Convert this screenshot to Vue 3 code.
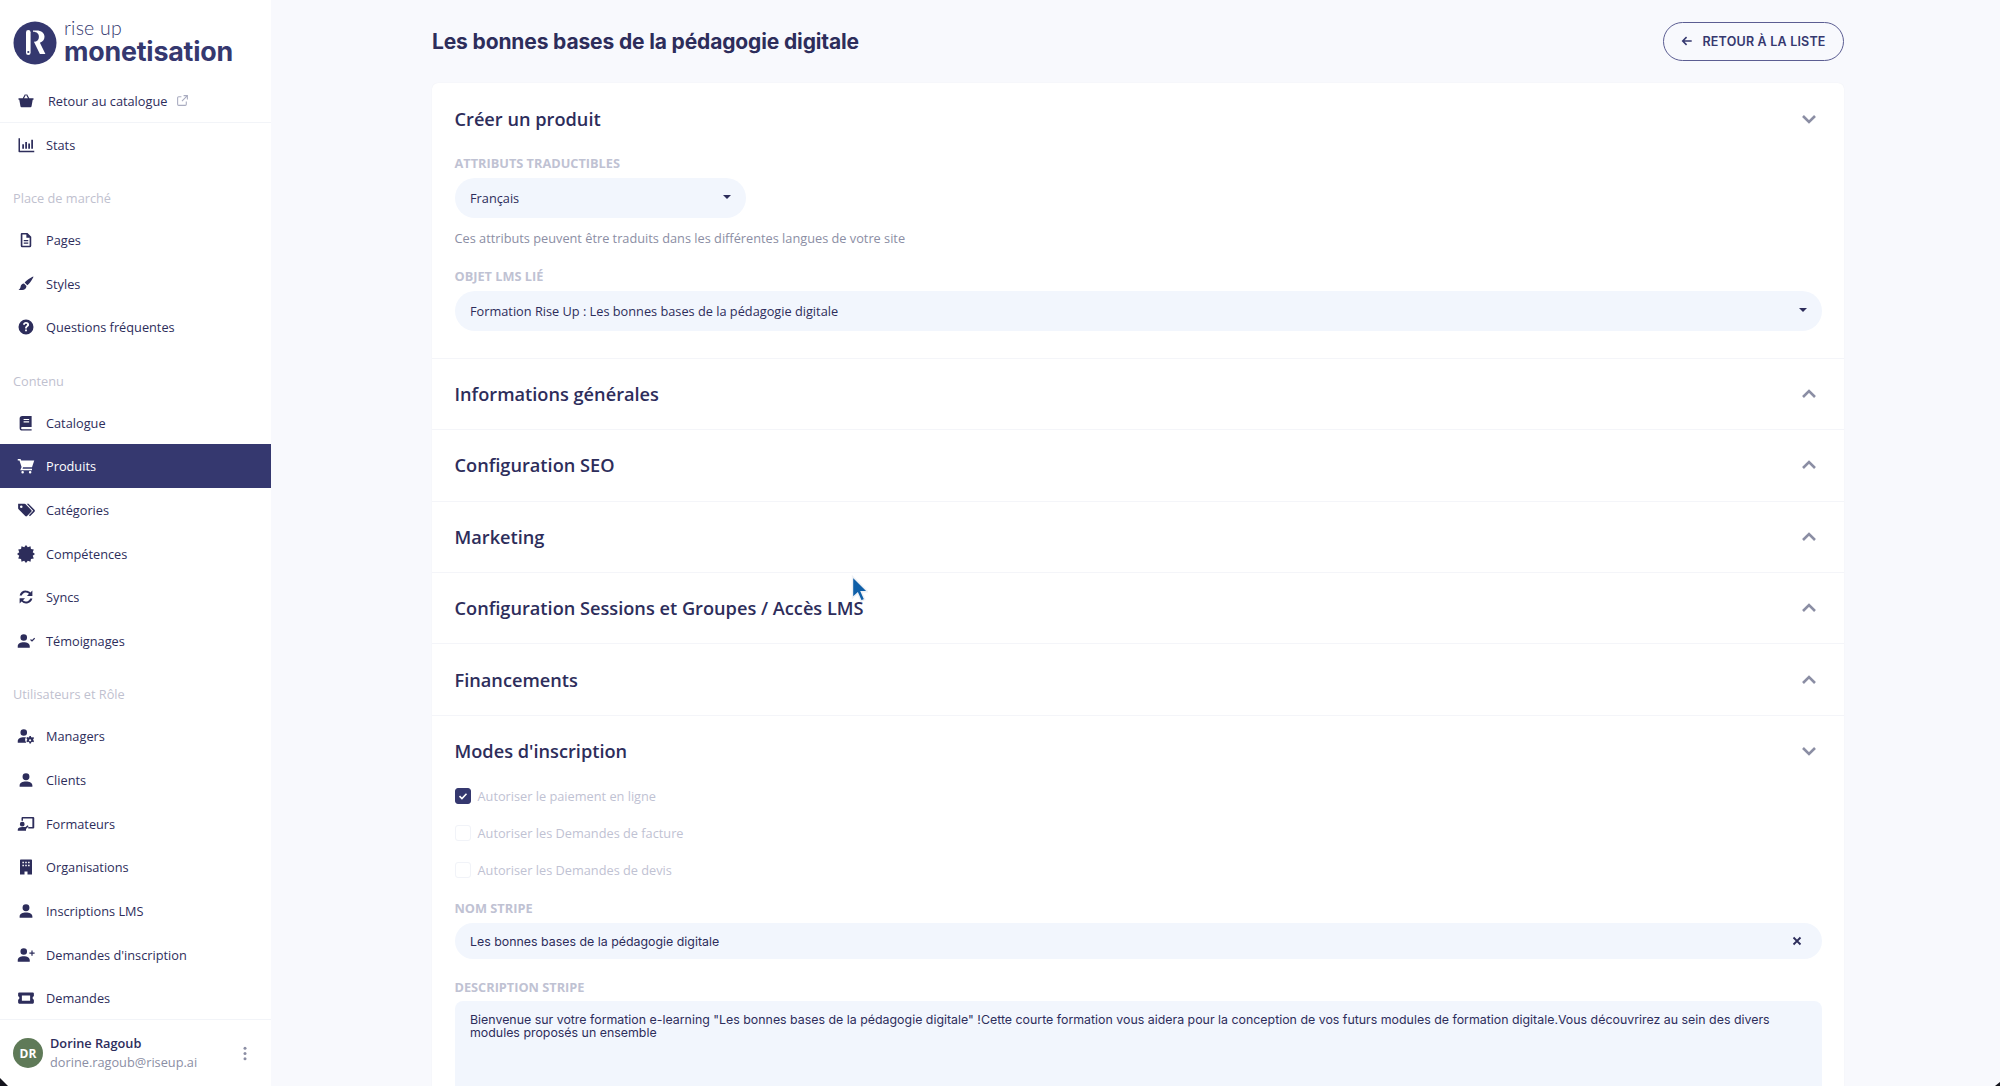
<script setup>
const teeth = 12
const badge = Array.from({ length: teeth * 2 }, (_, i) => {
  const r = i % 2 ? 9.3 : 12
  const a = (Math.PI * i) / teeth
  return `${i ? 'L' : 'M'}${(12 + r * Math.sin(a)).toFixed(2)} ${(12 - r * Math.cos(a)).toFixed(2)}`
}).join('') + 'z'
const icons = {
  basket: 'M3 10h18l-1.6 9a1.5 1.5 0 0 1-1.5 1.2H6.1A1.5 1.5 0 0 1 4.6 19zM2 8.4h5.6l3-5.4 1.4.8-2.6 4.6h5.2L12 3.8l1.4-.8 3 5.4H22v2H2z',
  file: 'M6 2.500h8l5 5v12a2 2 0 0 1-2 2H7a2 2 0 0 1-2-2v-15a2 2 0 0 1 1-2zm1.200 2v15h9.600V9h-4.300V4.500zM9 12h6v1.600H9zm0 3.300h6v1.600H9z',
  brush: 'M21.800 2.200c.6.600-5.300 9.600-8 11.500l-3.600-3.600c2-2.700 11-8.500 11.600-7.900zM9.300 11.400l3.300 3.300c-.1 3.200-2.600 5.300-5.600 5.300H2c1.900-1.300 2.500-2.300 2.700-4 .3-2.700 2.300-4.600 4.600-4.600z',
  help: 'M12 2a10 10 0 1 0 0 20 10 10 0 0 0 0-20zm1.200 15.700h-2.400v-2.300h2.400zm2.300-7.200c-.5.800-1.600 1.400-2.100 2-.2.300-.2.700-.2 1.500h-2.400c0-1.300.1-2 .7-2.700.6-.8 2-1.400 2-2.500 0-.8-.7-1.300-1.500-1.300-1 0-1.600.6-1.800 1.700l-2.300-.5c.4-2.100 2-3.300 4.100-3.300 2.400 0 4.100 1.300 4.100 3.300 0 1-.2 1.600-.6 2.300z',
  book: 'M7 2.500h12.500v14.700H7a1.600 1.600 0 0 0 0 3.200h12.500v1.600H7A3.500 3.500 0 0 1 3.500 18.500V6A3.500 3.500 0 0 1 7 2.500zm1.800 4v1.500h7.400V6.500zm0 3.200v1.500h7.400V9.700z',
  cart: 'M1 2.500h3.700l.9 2.300H23l-3 9H8.100l-.7 1.800H20v2.100H4.300l1.800-4.300L3.300 4.600H1zM7.500 18.700a1.700 1.700 0 1 1 0 3.400 1.700 1.700 0 0 1 0-3.400zm10 0a1.700 1.700 0 1 1 0 3.400 1.700 1.700 0 0 1 0-3.400z',
  tags: 'M1.500 3.500h8.300a2 2 0 0 1 1.400.6l7.800 7.900a1.700 1.700 0 0 1 0 2.400l-5.600 5.600a1.700 1.700 0 0 1-2.400 0l-8.900-8.900a2 2 0 0 1-.6-1.400zM5.700 6a1.700 1.700 0 1 0 0 3.400 1.700 1.700 0 0 0 0-3.400zM13 3.500h2.300l8 8.300a1.800 1.800 0 0 1 0 2.500l-6 6-1.400-1.400 5.700-5.800z',
  badge,
  sync: 'M12 3.500c2.300 0 4.400.9 5.900 2.400L20.500 3.300v7.200h-7.200l2.700-2.700A5.700 5.700 0 0 0 6.400 10H3.500A8.600 8.600 0 0 1 12 3.500zM3.500 13.500h7.200L8 16.200A5.700 5.700 0 0 0 17.600 14h2.900a8.600 8.600 0 0 1-14.400 4.100l-2.600 2.600z',
  userCheck: 'M9 3a4.400 4.400 0 1 1 0 8.800A4.400 4.400 0 0 1 9 3zM1 21v-2.500c0-3 3.600-5 8-5s8 2 8 5V21zM17.500 10.500l1.100-1.100 1.400 1.400 3-3 1.100 1.100-4.100 4.100z',
  userCog: 'M9 3a4.400 4.400 0 1 1 0 8.800A4.400 4.400 0 0 1 9 3zM1 21v-2.500c0-3 3.600-5 8-5 1 0 2 .1 2.900.3a6 6 0 0 0 .5 7.200zM18.500 12l.4 1.500 1.400.6 1.400-.7 1 1.700-1.100 1 .1 1.500 1.100 1-1 1.700-1.500-.6-1.300.7-.4 1.500h-2l-.4-1.500-1.300-.7-1.500.6-1-1.700 1.100-1 0-1.500-1.100-1 1-1.700 1.500.7 1.300-.6.400-1.500zm-1 4.300a1.500 1.500 0 1 0 0 3 1.500 1.500 0 0 0 0-3z',
  user: 'M12 3a4.600 4.600 0 1 1 0 9.200A4.600 4.600 0 0 1 12 3zM3.500 21v-2c0-3 3.800-5 8.500-5s8.500 2 8.500 5v2z',
  teacher: 'M7 2.500h14.500a1.500 1.500 0 0 1 1.500 1.500v12.500a1.500 1.500 0 0 1-1.500 1.500h-6.500v-2h5.500V4.500H8v3H6V4a1.500 1.500 0 0 1 1-1.500zM7 9a3.200 3.200 0 1 1 0 6.400A3.200 3.200 0 0 1 7 9zM1 21v-1.500c0-2 2.600-3.500 6-3.500h4.500l2.500-2.500 1.500 1.500-3.500 3.500H12V21z',
  building: 'M5 2h14a1 1 0 0 1 1 1v19h-6v-4h-4v4H4V3a1 1 0 0 1 1-1zm2.200 3v2h2V5zm3.800 0v2h2V5zm3.800 0v2h2V5zM7.200 9v2h2V9zm3.800 0v2h2V9zm3.800 0v2h2V9z',
  userPlus: 'M9 3a4.400 4.400 0 1 1 0 8.800A4.400 4.400 0 0 1 9 3zM1 21v-2.500c0-3 3.600-5 8-5s8 2 8 5V21zM19.200 6h1.600v2.700h2.700v1.600h-2.700V13h-1.600v-2.700h-2.700V8.700h2.700z',
  ticket: 'M3 4.500h18a1.500 1.500 0 0 1 1.500 1.500v3.700a2.400 2.400 0 0 0 0 4.600V18a1.500 1.500 0 0 1-1.500 1.500H3A1.500 1.500 0 0 1 1.500 18v-3.700a2.400 2.400 0 0 0 0-4.600V6A1.500 1.500 0 0 1 3 4.500zM6.500 8.500v7h11v-7z'
}
const groups = [
  { title: 'Place de marché', items: [['Pages', 'file'], ['Styles', 'brush'], ['Questions fréquentes', 'help']] },
  { title: 'Contenu', items: [['Catalogue', 'book'], ['Produits', 'cart', true], ['Catégories', 'tags'], ['Compétences', 'badge'], ['Syncs', 'sync'], ['Témoignages', 'userCheck']] },
  { title: 'Utilisateurs et Rôle', items: [['Managers', 'userCog'], ['Clients', 'user'], ['Formateurs', 'teacher'], ['Organisations', 'building'], ['Inscriptions LMS', 'user'], ["Demandes d'inscription", 'userPlus'], ['Demandes', 'ticket']] }
]
const closedSections = ['Informations générales', 'Configuration SEO', 'Marketing', 'Configuration Sessions et Groupes / Accès LMS', 'Financements']
const checks = [['Autoriser le paiement en ligne', true], ['Autoriser les Demandes de facture', false], ['Autoriser les Demandes de devis', false]]
</script>

<template>
  <div class="page">
    <aside class="side">
      <div class="logo">
        <svg class="mark" viewBox="0 0 44 44">
          <circle cx="22" cy="22" r="21.500" fill="#35386f" />
          <rect x="13" y="9" width="4.600" height="25" rx="2.300" fill="#fff" />
          <circle cx="15.300" cy="31" r="1.100" fill="#35386f" />
          <path d="M20 9.500h3.500c5 0 8 2.700 8 6.300 0 3-1.800 5-4.600 5.900l5.500 11.300h-5.500l-6-12.300c3 0 5-1.800 5-4.800 0-3-1.800-5.200-5.900-5.200z" fill="#fff" />
        </svg>
        <div class="logo-text">
          <span class="logo-top">rise up</span>
          <span class="logo-main">monetisation</span>
        </div>
      </div>
      <nav class="nav">
        <a class="back">
          <svg class="ico" viewBox="0 0 24 24"><path :d="icons.basket" /></svg>
          <span>Retour au catalogue</span>
          <svg class="ext" viewBox="0 0 24 24"><path d="M10 5H5a2 2 0 0 0-2 2v12a2 2 0 0 0 2 2h12a2 2 0 0 0 2-2v-5M14 3h7v7M21 3 11 13" /></svg>
        </a>
        <a class="item stats">
          <svg class="ico" viewBox="0 0 24 24"><path d="M2 3h2v16.500h19v2H3a1 1 0 0 1-1-1zM7 11h2.300v6H7zm4-3h2.300v9H11zm4 2h2.300v7H15zm4-5h2.300v12H19z" /></svg>
          <span>Stats</span>
        </a>
        <section v-for="g in groups" :key="g.title" class="group">
          <h3>{{ g.title }}</h3>
          <a v-for="it in g.items" :key="it[0]" class="item" :class="{ active: it[2] }">
            <svg class="ico" viewBox="0 0 24 24"><path :d="icons[it[1]]" /></svg>
            <span>{{ it[0] }}</span>
          </a>
        </section>
      </nav>
      <footer class="me">
        <div class="avatar">DR</div>
        <div class="who">
          <strong>Dorine Ragoub</strong>
          <span>dorine.ragoub@riseup.ai</span>
        </div>
        <svg class="dots" viewBox="0 0 6 20"><circle cx="3" cy="3" r="2" /><circle cx="3" cy="10" r="2" /><circle cx="3" cy="17" r="2" /></svg>
      </footer>
    </aside>

    <main class="main">
      <header class="head">
        <h1>Les bonnes bases de la pédagogie digitale</h1>
        <button class="back-btn">
          <svg viewBox="0 0 14 14"><path d="M12.500 7H2M6.500 2.500 2 7l4.500 4.500" /></svg>
          RETOUR À LA LISTE
        </button>
      </header>

      <div class="card">
        <section class="sec open first">
          <div class="sec-head">
            <h2>Créer un produit</h2>
            <svg class="chev" viewBox="0 0 16 10"><path d="M2 2l6 6 6-6" /></svg>
          </div>
          <label class="lab">ATTRIBUTS TRADUCTIBLES</label>
          <div class="field sel short">Français<i class="caret"></i></div>
          <p class="hint">Ces attributs peuvent être traduits dans les différentes langues de votre site</p>
          <label class="lab">OBJET LMS LIÉ</label>
          <div class="field sel">Formation Rise Up : Les bonnes bases de la pédagogie digitale<i class="caret"></i></div>
        </section>

        <section v-for="s in closedSections" :key="s" class="sec">
          <div class="sec-head">
            <h2>{{ s }}</h2>
            <svg class="chev" viewBox="0 0 16 10"><path d="M2 8l6-6 6 6" /></svg>
          </div>
        </section>

        <section class="sec open">
          <div class="sec-head">
            <h2>Modes d'inscription</h2>
            <svg class="chev" viewBox="0 0 16 10"><path d="M2 2l6 6 6-6" /></svg>
          </div>
          <div v-for="c in checks" :key="c[0]" class="check">
            <span class="box" :class="{ on: c[1] }">
              <svg v-if="c[1]" viewBox="0 0 16 16"><path d="M4 8.200l2.800 2.800L12 5.500" /></svg>
            </span>
            <span>{{ c[0] }}</span>
          </div>
          <label class="lab stripe">NOM STRIPE</label>
          <div class="field inter name">Les bonnes bases de la pédagogie digitale
            <svg class="x" viewBox="0 0 10 10"><path d="M1.500 1.500l7 7M8.500 1.500l-7 7" /></svg>
          </div>
          <label class="lab desc">DESCRIPTION STRIPE</label>
          <div class="area">Bienvenue sur votre formation e-learning "Les bonnes bases de la pédagogie digitale" !Cette courte formation vous aidera pour la conception de vos futurs modules de formation digitale.Vous découvrirez au sein des divers modules proposés un ensemble</div>
        </section>
      </div>
    </main>

    <svg class="cursor" viewBox="0 0 18 30"><path d="M1.500 1.500v23l5.500-5 3.800 8.500 3.800-1.800-3.700-8.200h7z" fill="#0f5fa8" stroke="#eef1f6" stroke-width="1.500" /></svg>
    <i class="corner left"></i>
    <i class="corner right"></i>
  </div>
</template>

<style>
html, body { margin: 0; background: #f8f9fd; overflow: hidden; }
</style>

<style scoped>
.page {
  position: relative;
  display: flex;
  height: 1086px;
  overflow: hidden;
  background: #f8f9fd;
  color: #2d2d5b;
  font-family: "Open Sans", sans-serif;
}
.side {
  width: 271px;
  flex: none;
  display: flex;
  flex-direction: column;
  background: #fff;
}
.logo {
  display: flex;
  align-items: center;
  gap: 7px;
  height: 79px;
  padding: 7px 0 0 13px;
  box-sizing: border-box;
}
.mark { width: 44px; height: 44px; flex: none; }
.logo-text { display: flex; flex-direction: column; color: #35386f; margin-top: -3px; }
.logo-top { font: 300 19.500px/19px Lato, sans-serif; letter-spacing: .2px; }
.logo-main { font: 700 26.800px/28px Inter, sans-serif; letter-spacing: -.2px; }
.nav { flex: 1; min-height: 0; }
.ico { width: 18px; height: 18px; flex: none; fill: #2d2d5b; }
.back {
  display: flex;
  align-items: center;
  height: 44px;
  padding-left: 17px;
  box-sizing: border-box;
  border-bottom: 1px solid #f2f4f8;
  font-size: 12.750px;
}
.back > span { margin-left: 13px; }
.ext { width: 13px; height: 13px; margin-left: 9px; fill: none; stroke: #a9acc0; stroke-width: 2; }
.item {
  display: flex;
  align-items: center;
  height: 43.700px;
  padding-left: 17px;
  font-size: 12.750px;
}
.item > span { margin-left: 11px; }
.item.active { background: #35386f; color: #fff; }
.item.active .ico { fill: #fff; }
.group h3 {
  margin: 0;
  padding: 22.500px 0 10px 13px;
  font-size: 12.750px;
  line-height: 19px;
  font-weight: 400;
  color: #bfc1cf;
}
.me {
  height: 67px;
  flex: none;
  box-sizing: border-box;
  border-top: 1px solid #f2f4f8;
  display: flex;
  align-items: center;
  padding: 0 23px 0 13px;
}
.avatar {
  width: 30px;
  height: 30px;
  border-radius: 50%;
  background: #5f7a58;
  color: #fff;
  font-size: 12px;
  font-weight: 700;
  display: flex;
  align-items: center;
  justify-content: center;
  flex: none;
}
.who { flex: 1; margin-left: 7px; display: flex; flex-direction: column; font-size: 12.750px; line-height: 19px; }
.who strong { font-weight: 600; }
.who span { color: #8b8ea4; }
.dots { width: 6px; height: 15px; fill: #8b8ea4; }
.main { flex: 1; min-width: 0; padding: 0 156.500px 0 161px; }
.head {
  height: 83px;
  display: flex;
  align-items: center;
  justify-content: space-between;
}
h1 {
  margin: 0;
  font: 700 21px/28px Inter, sans-serif;
  letter-spacing: -.14px;
}
.back-btn {
  display: flex;
  align-items: center;
  gap: 10px;
  width: 181px;
  height: 39px;
  box-sizing: border-box;
  padding: 0 0 0 17px;
  margin-bottom: 1px;
  border: 1px solid #5b5d92;
  border-radius: 20px;
  background: transparent;
  color: #35386f;
  font: 600 12.500px Inter, sans-serif;
  letter-spacing: .2px;
  white-space: nowrap;
}
.back-btn svg { width: 12px; height: 12px; fill: none; stroke: #35386f; stroke-width: 1.800; }
.card {
  background: #fff;
  border-radius: 6px 6px 0 0;
  box-shadow: 0 0 1px rgba(45, 45, 91, .08);
  height: 1100px;
}
.sec { padding: 0 22px 0 22.500px; border-bottom: 1px solid #f4f5f9; }
.sec-head {
  height: 70.400px;
  display: flex;
  align-items: center;
  justify-content: space-between;
  padding-right: 4.500px;
}
h2 { margin: 0; font-size: 18.200px; line-height: 26px; font-weight: 600; color: #2d2d5b; }
.chev { width: 16px; height: 10px; fill: none; stroke: #8b8ea4; stroke-width: 2.600; }
.lab {
  display: block;
  font-size: 12.750px;
  line-height: 16px;
  font-weight: 700;
  color: #bfc2d3;
}
.first .sec-head { height: 72px; margin-bottom: .4px; }
.field {
  display: flex;
  align-items: center;
  background: #f2f6fd;
  border-radius: 20px;
  font-size: 12.750px;
  padding: 0 15.500px;
  height: 40px;
  margin-top: 7px;
  position: relative;
  box-sizing: border-box;
}
.short { width: 291px; }
.caret {
  position: absolute;
  right: 15px;
  top: 17px;
  width: 0;
  height: 0;
  border: 4px solid transparent;
  border-top: 4.500px solid #2d2d5b;
  border-bottom: 0;
}
.hint { margin: 11px 0 19.500px; font-size: 12.750px; line-height: 19px; color: #8b8ea4; }
.first { padding-bottom: 27px; }
.check {
  display: flex;
  align-items: center;
  gap: 7px;
  height: 37.300px;
  font-size: 12.750px;
  color: #bfc2d3;
}
.sec-head + .check { margin-top: -9px; }
.box {
  width: 16px;
  height: 16px;
  box-sizing: border-box;
  border: 1px solid #f1f3f8;
  border-radius: 3px;
  background: #fff;
  display: flex;
}
.box.on { background: #35386f; border-color: #35386f; }
.box svg { fill: none; stroke: #fff; stroke-width: 1.800; width: 14px; height: 14px; }
.stripe { margin-top: 11px; }
.inter { font-family: Inter, sans-serif; font-size: 12.380px; }
.name { height: 36px; margin-top: 7px; justify-content: flex-start; }
.x { position: absolute; right: 20px; top: 13px; width: 10px; height: 10px; fill: none; stroke: #2d2d5b; stroke-width: 1.800; }
.desc { margin-top: 19.500px; }
.area {
  margin-top: 6px;
  height: 180px;
  box-sizing: border-box;
  padding: 12px 15.500px;
  background: #f2f6fd;
  border-radius: 8px;
  font: 12.380px/13px Inter, sans-serif;
}
.cursor { position: absolute; left: 851px; top: 575px; width: 17px; height: 28px; }
.corner { position: absolute; background: #14141c; }
.corner.left { left: 0; bottom: 0; width: 8px; height: 8px; clip-path: polygon(0 0, 100% 100%, 0 100%); }
.corner.right { right: 0; bottom: 0; width: 5px; height: 4px; clip-path: polygon(100% 0, 100% 100%, 0 100%); }
</style>
